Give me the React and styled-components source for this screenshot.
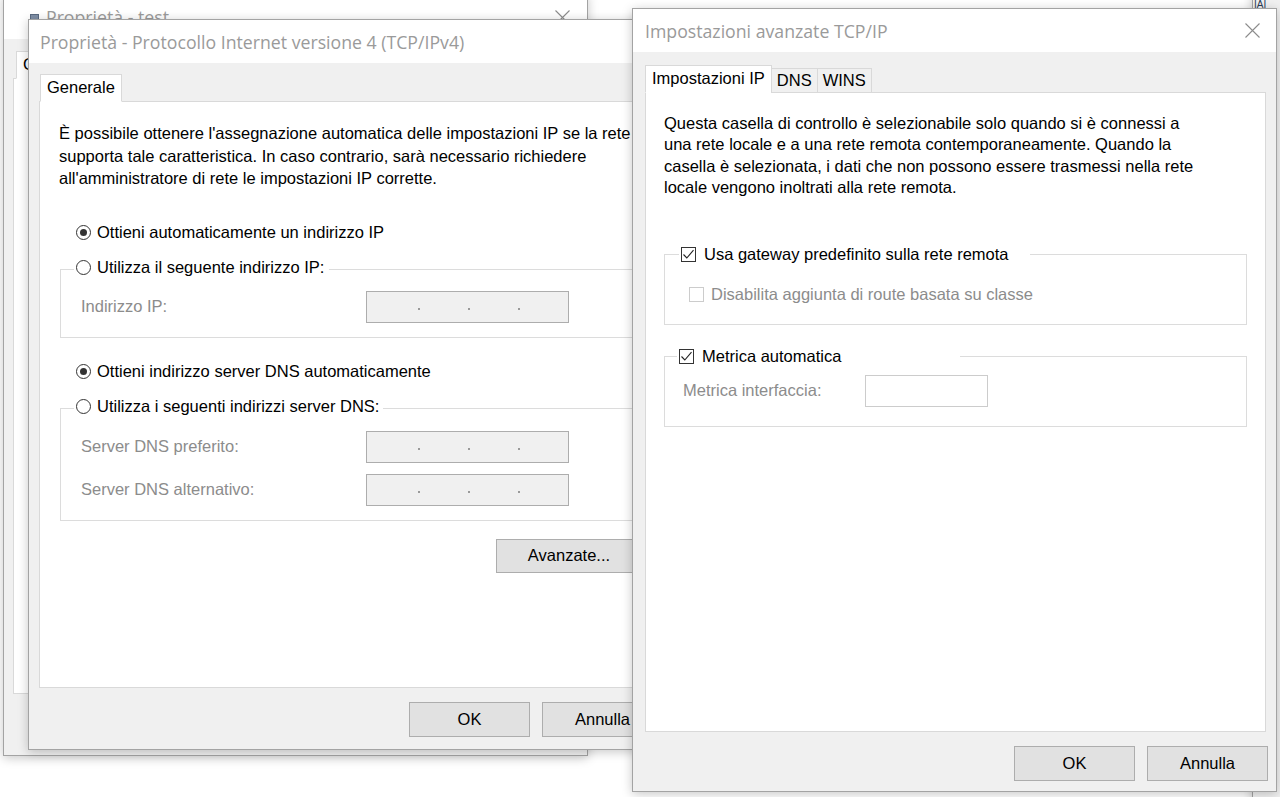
import React from "react";
import styled, { createGlobalStyle } from "styled-components";

const Global = createGlobalStyle`
  html, body { margin: 0; padding: 0; background: #fff; overflow: hidden; }
  body { font-family: "Liberation Sans", Arial, sans-serif; }
`;

const Desktop = styled.div`
  position: relative;
  width: 1280px;
  height: 797px;
  overflow: hidden;
  background: #fff;
`;

const Win = styled.div`
  position: absolute;
  z-index: 0;
  left: ${(p) => p.$x}px;
  top: ${(p) => p.$y}px;
  width: ${(p) => p.$w}px;
  height: ${(p) => p.$h}px;
  box-sizing: border-box;
  display: flex;
  flex-direction: column;
  background: #f0f0f0;
  border: 1px solid #a3a3a3;
  box-shadow: 0 2px 10px rgba(0, 0, 0, 0.22);
`;

const TitleBar = styled.div`
  flex: none;
  height: ${(p) => p.$h}px;
  box-sizing: border-box;
  background: #fff;
  display: flex;
  align-items: center;
  gap: 7px;
  padding: 0 ${(p) => p.$pr}px 0 ${(p) => p.$pl}px;
`;

const Title = styled.span`
  flex: 1;
  font-family: "Open Sans", "Noto Sans", sans-serif;
  font-size: 17.7px;
  color: #9a9a9a;
  white-space: nowrap;
`;

const CloseIcon = () => (
  <svg width="15" height="15" viewBox="0 0 15 15">
    <path d="M0.5 0.5 L14.5 14.5 M14.5 0.5 L0.5 14.5" stroke="#8c8c8c" strokeWidth="1.1" fill="none" />
  </svg>
);

const NetIcon = () => (
  <svg width="9" height="9" viewBox="0 0 9 9">
    <rect x="0.5" y="1.5" width="8" height="5" fill="#7f8fa6" stroke="#5a6a80" strokeWidth="1" />
    <rect x="3" y="7" width="3" height="2" fill="#5a6a80" />
  </svg>
);

const Body = styled.div`
  flex: 1;
  min-height: 0;
  display: flex;
  flex-direction: column;
  padding: ${(p) => p.$pad};
`;

const TabStrip = styled.div`
  flex: none;
  display: flex;
  align-items: flex-end;
  height: 28px;
  margin-bottom: -1px;
  position: relative;
  z-index: 1;
  padding-left: ${(p) => p.$indent || 0}px;
`;

const Tab = styled.div`
  box-sizing: border-box;
  height: ${(p) => (p.$active ? 28 : 25)}px;
  display: flex;
  align-items: center;
  padding: ${(p) => (p.$active ? "0 6px 2px" : "0 5px")};
  font-size: 16.5px;
  color: #000;
  white-space: nowrap;
  background: ${(p) => (p.$active ? "#fff" : "#f0f0f0")};
  border: 1px solid #d9d9d9;
  border-bottom-color: ${(p) => (p.$active ? "#fff" : "#d9d9d9")};
  margin-left: ${(p) => (p.$active ? 0 : -1)}px;
  &:first-child { margin-left: 0; }
`;

const Panel = styled.div`
  flex: 1;
  min-height: 0;
  box-sizing: border-box;
  background: #fff;
  border: 1px solid #d9d9d9;
  display: flex;
  flex-direction: column;
  padding: ${(p) => p.$pad};
`;

const Para = styled.p`
  margin: 0;
  font-size: 16.5px;
  line-height: ${(p) => p.$lh}px;
  color: #000;
  white-space: nowrap;
`;

const Row = styled.div`
  display: flex;
  align-items: center;
  gap: ${(p) => p.$gap ?? 6}px;
  height: 20px;
  margin-left: ${(p) => p.$ml || 0}px;
  margin-top: ${(p) => p.$mt || 0}px;
  font-size: 16.5px;
  color: ${(p) => (p.$disabled ? "#8c8c8c" : "#000")};
  white-space: nowrap;
`;

const RadioCircle = styled.span`
  flex: none;
  box-sizing: border-box;
  width: 15px;
  height: 15px;
  border: 1px solid #333;
  border-radius: 50%;
  background: #fff;
  display: grid;
  place-items: center;
`;

const RadioDot = styled.span`
  width: 7px;
  height: 7px;
  border-radius: 50%;
  background: #333;
`;

const CheckBox = styled.span`
  flex: none;
  box-sizing: border-box;
  width: 15px;
  height: 15px;
  border: 1px solid ${(p) => (p.$disabled ? "#cccccc" : "#333")};
  background: #fff;
  display: grid;
  place-items: center;
`;

const Radio = ({ checked, label, ml, mt }) => (
  <Row $ml={ml} $mt={mt}>
    <RadioCircle>{checked && <RadioDot />}</RadioCircle>
    <span>{label}</span>
  </Row>
);

const Check = ({ checked, disabled, label, ml, mt, gap }) => (
  <Row $ml={ml} $mt={mt} $disabled={disabled} $gap={gap}>
    <CheckBox $disabled={disabled}>
      {checked && (
        <svg width="13" height="13" viewBox="0 0 13 13">
          <path d="M1.5 6.5 L4.8 10 L11.5 2.2" stroke="#222" strokeWidth="1.1" fill="none" />
        </svg>
      )}
    </CheckBox>
    <span>{label}</span>
  </Row>
);

const Group = styled.fieldset`
  margin: ${(p) => p.$mt}px 0 0 ${(p) => p.$ml || 0}px;
  padding: 0;
  border: 1px solid #dcdcdc;
  min-width: 0;
`;

const Legend = styled.legend`
  margin-left: ${(p) => p.$ml}px;
  padding: 0 ${(p) => p.$pr}px ${(p) => p.$pb || 0}px 2px;
`;

const GroupBody = styled.div`
  padding: ${(p) => p.$pad};
`;

const FieldGrid = styled.div`
  display: grid;
  grid-template-columns: ${(p) => p.$label}px ${(p) => p.$field}px;
  row-gap: 11px;
  align-items: center;
`;

const DisabledLabel = styled.span`
  font-size: 16.5px;
  color: #8c8c8c;
  white-space: nowrap;
`;

const IpField = styled.div`
  box-sizing: border-box;
  height: 32px;
  background: #f0f0f0;
  border: 1px solid #adadad;
  display: flex;
  align-items: center;
  padding: 5px 0 0 51px;
  gap: 48px;
`;

const IpDot = styled.span`
  width: 2px;
  height: 2px;
  background: #9a9a9a;
`;

const NumField = styled.div`
  box-sizing: border-box;
  height: 32px;
  background: #fff;
  border: 1px solid #cccccc;
`;

const Button = styled.div`
  flex: none;
  box-sizing: border-box;
  width: ${(p) => p.$w || 121}px;
  height: ${(p) => p.$h || 35}px;
  background: #e1e1e1;
  border: 1px solid #adadad;
  display: flex;
  align-items: center;
  justify-content: center;
  font-size: 16.5px;
  color: #000;
  align-self: ${(p) => p.$self || "auto"};
  margin-top: ${(p) => p.$mt || 0}px;
`;

const ButtonRow = styled.div`
  flex: none;
  display: flex;
  justify-content: flex-end;
  gap: 12px;
  margin: 14px ${(p) => p.$mr || 0}px 0 0;
`;

const Footer = styled.div`
  flex: none;
  height: ${(p) => p.$h}px;
`;

const PeekText = styled.span`
  font-size: 10px;
  color: #2b3a55;
  margin: -1px 0 0 1px;
  line-height: 10px;
`;

const IpInput = () => (
  <IpField>
    <IpDot />
    <IpDot />
    <IpDot />
  </IpField>
);

export default function App() {
  return (
    <>
      <Global />
      <Desktop>
        {/* window peeking at right */}
        <Win $x={1252} $y={-30} $w={80} $h={840}>
          <Footer $h={30} />
          <PeekText>IAI</PeekText>
        </Win>

        {/* back window: Proprietà - test */}
        <Win $x={3} $y={-6} $w={585} $h={762}>
          <TitleBar $h={44} $pl={26} $pr={17}>
            <NetIcon />
            <Title>Proprietà - test</Title>
            <CloseIcon />
          </TitleBar>
          <Body $pad="12px 10px 0 9px">
            <TabStrip $indent={3}>
              <Tab $active>Generale</Tab>
            </TabStrip>
            <Panel $pad="0" />
            <Footer $h={61} />
          </Body>
        </Win>

        {/* IPv4 properties */}
        <Win $x={28} $y={19} $w={646} $h={731}>
          <TitleBar $h={43} $pl={11} $pr={17}>
            <Title>Proprietà - Protocollo Internet versione 4 (TCP/IPv4)</Title>
          </TitleBar>
          <Body $pad="11px 10px 12px 10px">
            <TabStrip $indent={1}>
              <Tab $active>Generale</Tab>
            </TabStrip>
            <Panel $pad="20px 20px 0 19px">
              <Para $lh={22.5}>
                È possibile ottenere l'assegnazione automatica delle impostazioni IP se la rete
                <br />
                supporta tale caratteristica. In caso contrario, sarà necessario richiedere
                <br />
                all'amministratore di rete le impostazioni IP corrette.
              </Para>
              <Radio checked ml={17} mt={33} label="Ottieni automaticamente un indirizzo IP" />
              <Group $mt={15} $ml={1}>
                <Legend $ml={13} $pr={5} $pb={4}>
                  <Radio label="Utilizza il seguente indirizzo IP:" />
                </Legend>
                <GroupBody $pad="9px 0 14px 20px">
                  <FieldGrid $label={285} $field={203}>
                    <DisabledLabel>Indirizzo IP:</DisabledLabel>
                    <IpInput />
                  </FieldGrid>
                </GroupBody>
              </Group>
              <Radio checked ml={17} mt={24} label="Ottieni indirizzo server DNS automaticamente" />
              <Group $mt={15} $ml={1}>
                <Legend $ml={13} $pr={4} $pb={4}>
                  <Radio label="Utilizza i seguenti indirizzi server DNS:" />
                </Legend>
                <GroupBody $pad="10px 0 14px 20px">
                  <FieldGrid $label={285} $field={203}>
                    <DisabledLabel>Server DNS preferito:</DisabledLabel>
                    <IpInput />
                    <DisabledLabel>Server DNS alternativo:</DisabledLabel>
                    <IpInput />
                  </FieldGrid>
                </GroupBody>
              </Group>
              <Button $w={146} $h={34} $self="flex-end" $mt={18}>
                Avanzate...
              </Button>
            </Panel>
            <ButtonRow>
              <Button>OK</Button>
              <Button>Annulla</Button>
            </ButtonRow>
          </Body>
        </Win>

        {/* Advanced TCP/IP settings */}
        <Win $x={632} $y={8} $w={645} $h={784}>
          <TitleBar $h={43} $pl={12} $pr={16}>
            <Title>Impostazioni avanzate TCP/IP</Title>
            <CloseIcon />
          </TitleBar>
          <Body $pad="13px 10px 10px 12px">
            <TabStrip>
              <Tab $active>Impostazioni IP</Tab>
              <Tab>DNS</Tab>
              <Tab>WINS</Tab>
            </TabStrip>
            <Panel $pad="20px 18px 0 18px">
              <Para $lh={21.4}>
                Questa casella di controllo è selezionabile solo quando si è connessi a
                <br />
                una rete locale e a una rete remota contemporaneamente. Quando la
                <br />
                casella è selezionata, i dati che non possono essere trasmessi nella rete
                <br />
                locale vengono inoltrati alla rete remota.
              </Para>
              <Group $mt={46}>
                <Legend $ml={14} $pr={21}>
                  <Check checked gap={8} label="Usa gateway predefinito sulla rete remota" />
                </Legend>
                <GroupBody $pad="20px 0 19px 24px">
                  <Check disabled gap={7} label="Disabilita aggiunta di route basata su classe" />
                </GroupBody>
              </Group>
              <Group $mt={22}>
                <Legend $ml={12} $pr={119}>
                  <Check checked gap={8} label="Metrica automatica" />
                </Legend>
                <GroupBody $pad="8px 0 19px 18px">
                  <FieldGrid $label={182} $field={123}>
                    <DisabledLabel>Metrica interfaccia:</DisabledLabel>
                    <NumField />
                  </FieldGrid>
                </GroupBody>
              </Group>
            </Panel>
            <ButtonRow $mr={-2}>
              <Button>OK</Button>
              <Button>Annulla</Button>
            </ButtonRow>
          </Body>
        </Win>
      </Desktop>
    </>
  );
}
